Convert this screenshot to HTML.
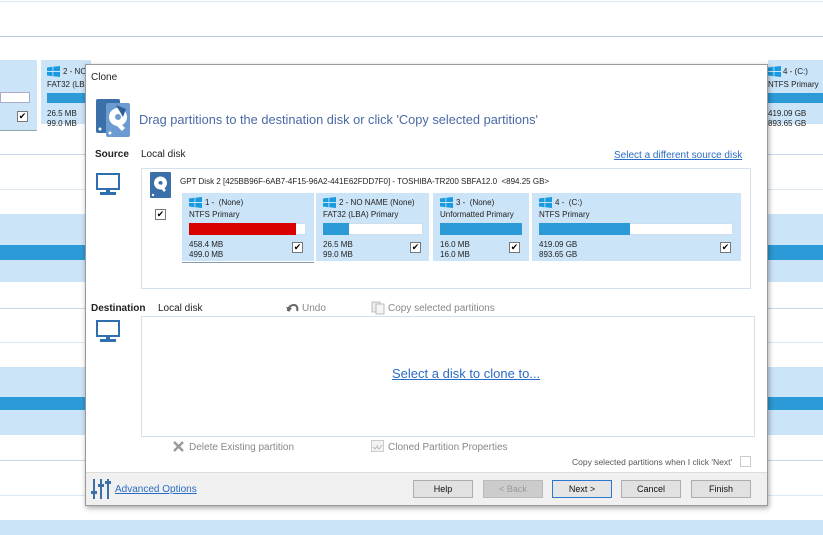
<!DOCTYPE html>
<html><head><meta charset="utf-8"><style>
*{margin:0;padding:0;box-sizing:border-box}
body{width:823px;height:535px;position:relative;overflow:hidden;background:#fff;font-family:"Liberation Sans",sans-serif;color:#222}
.a{position:absolute}
.ln{position:absolute;left:0;width:823px;height:1px;background:#c8d8ea}
.lb{background:#cce4f7}
.st{background:#2b9ad6}
.t8{font-size:8px;line-height:10px}
.cb{position:absolute;width:11px;height:11px;border:1px solid #777;background:#fff;font-size:9px;line-height:9px;text-align:center;color:#000}
.win{width:13px;height:11px}
.btn{position:absolute;top:480px;height:18px;border:1px solid #adadad;background:#e1e1e1;font-size:9px;line-height:16px;text-align:center;color:#111}
.lnk{color:#2b6cc4;text-decoration:underline}
.gray{color:#888}
</style></head><body>
<div class="ln" style="top:1px;background:#dde8f3"></div>
<div class="ln" style="top:36px;background:#b3cce6"></div>
<div class="a lb" style="left:0;top:60px;width:37px;height:70px"></div>
<div class="a" style="left:0;top:92px;width:30px;height:11px;background:#fff;border:1px solid #aac"></div>
<div class="cb" style="left:17px;top:111px">✔</div>
<div class="a" style="left:0;top:130px;width:37px;height:1px;background:#8aa"></div>
<div class="a lb" style="left:41px;top:60px;width:50px;height:64px"></div>
<svg class="a win" style="left:47px;top:66px" viewBox="0 0 13 11"><path d="M0 1.5L5.5 .8V5H0zM6.3 .7L13 0V5H6.3zM0 6H5.5V10.2L0 9.5zM6.3 6H13V11L6.3 10.3z" fill="#1a9be0"/></svg>
<div class="a t8" style="left:63px;top:67px">2 - NO</div>
<div class="a t8" style="left:47px;top:80px">FAT32 (LBA)</div>
<div class="a st" style="left:47px;top:93px;width:40px;height:10px"></div>
<div class="a t8" style="left:47px;top:109px">26.5 MB<br>99.0 MB</div>
<div class="a lb" style="left:768px;top:60px;width:55px;height:64px"></div>
<svg class="a win" style="left:768px;top:66px" viewBox="0 0 13 11"><path d="M0 1.5L5.5 .8V5H0zM6.3 .7L13 0V5H6.3zM0 6H5.5V10.2L0 9.5zM6.3 6H13V11L6.3 10.3z" fill="#1a9be0"/></svg>
<div class="a t8" style="left:783px;top:67px">4 - (C:)</div>
<div class="a t8" style="left:768px;top:80px">NTFS Primary</div>
<div class="a st" style="left:768px;top:93px;width:55px;height:10px"></div>
<div class="a t8" style="left:768px;top:109px">419.09 GB<br>893.65 GB</div>
<div class="ln" style="top:154px"></div>
<div class="ln" style="top:189px;background:#dde8f3"></div>
<div class="a lb" style="left:0;top:214px;width:823px;height:68px"></div>
<div class="a st" style="left:0;top:245px;width:823px;height:15px"></div>
<div class="ln" style="top:308px"></div>
<div class="ln" style="top:342px;background:#dde8f3"></div>
<div class="a lb" style="left:0;top:367px;width:823px;height:68px"></div>
<div class="a st" style="left:0;top:397px;width:823px;height:13px"></div>
<div class="ln" style="top:460px"></div>
<div class="ln" style="top:495px;background:#dde8f3"></div>
<div class="a lb" style="left:0;top:520px;width:823px;height:15px"></div>

<div class="a" style="left:85px;top:64px;width:683px;height:442px;background:#fff;border:1px solid #9a9a9a;box-shadow:1px 2px 5px rgba(0,0,0,.35)"></div>
<div class="a" style="left:91px;top:72px;font-size:10px">Clone</div>
<svg class="a" style="left:96px;top:99px" width="38" height="38" viewBox="0 0 38 38">
<rect x="0" y="0" width="24" height="34" rx="2" fill="#3a6fa8"/>
<rect x="10" y="4" width="24" height="34" rx="2" fill="#6b9bd0"/>
<circle cx="22" cy="18" r="9" fill="#fff"/><circle cx="22" cy="18" r="3" fill="#6b9bd0"/>
<path d="M16 22l10 10 3-3-10-10z" fill="#fff"/><path d="M20 6l10 4-3 8z" fill="#2d5f99"/>
<circle cx="4" cy="30" r="1.5" fill="#fff"/><circle cx="14" cy="34" r="1.5" fill="#fff"/></svg>
<div class="a" style="left:139px;top:112px;font-size:12.8px;color:#4a6aa6">Drag partitions to the destination disk or click 'Copy selected partitions'</div>
<div class="a" style="left:95px;top:149px;font-size:10px;font-weight:bold">Source</div>
<div class="a" style="left:141px;top:149px;font-size:10px">Local disk</div>
<div class="a lnk" style="left:614px;top:150px;font-size:10px">Select a different source disk</div>
<svg class="a" style="left:96px;top:173px" width="24" height="24" viewBox="0 0 24 24"><rect x="1" y="1" width="22" height="15" fill="none" stroke="#2f6fb0" stroke-width="2"/><rect x="10" y="16" width="4" height="3" fill="#2f6fb0"/><rect x="4" y="19" width="16" height="3" fill="#2f6fb0"/></svg>
<div class="a" style="left:141px;top:168px;width:610px;height:121px;border:1px solid #d6e0ea"></div>
<svg class="a" style="left:150px;top:172px" width="21" height="26" viewBox="0 0 21 26"><rect width="21" height="26" rx="1" fill="#3a6fa8"/><circle cx="10.5" cy="11" r="6.5" fill="#fff"/><circle cx="10.5" cy="11" r="2" fill="#3a6fa8"/><path d="M8 13l6 7 2-2-6-6z" fill="#fff"/><circle cx="3" cy="23" r="1.2" fill="#fff"/></svg>
<div class="cb" style="left:155px;top:209px">✔</div>
<div class="a t8" style="left:180px;top:177px">GPT Disk 2 [425BB96F-6AB7-4F15-96A2-441E62FDD7F0] - TOSHIBA-TR200 SBFA12.0 &nbsp;&lt;894.25 GB&gt;</div>

<div class="a lb" style="left:182px;top:193px;width:132px;height:68px"></div>
<div class="a" style="left:182px;top:262px;width:132px;height:1px;background:#8a9aaa"></div>
<div class="a lb" style="left:316px;top:193px;width:113px;height:68px"></div>
<div class="a lb" style="left:433px;top:193px;width:96px;height:68px"></div>
<div class="a lb" style="left:532px;top:193px;width:209px;height:68px"></div>

<svg class="a win" style="left:189px;top:197px" viewBox="0 0 13 11"><path d="M0 1.5L5.5 .8V5H0zM6.3 .7L13 0V5H6.3zM0 6H5.5V10.2L0 9.5zM6.3 6H13V11L6.3 10.3z" fill="#1a9be0"/></svg>
<div class="a t8" style="left:205px;top:198px">1 - &nbsp;(None)</div>
<div class="a t8" style="left:189px;top:210px">NTFS Primary</div>
<div class="a" style="left:189px;top:223px;width:117px;height:12px;background:#fff;border:1px solid #cde"></div>
<div class="a" style="left:189px;top:223px;width:107px;height:12px;background:#d90000"></div>
<div class="a t8" style="left:189px;top:240px">458.4 MB<br>499.0 MB</div>
<div class="cb" style="left:292px;top:242px">✔</div>

<svg class="a win" style="left:323px;top:197px" viewBox="0 0 13 11"><path d="M0 1.5L5.5 .8V5H0zM6.3 .7L13 0V5H6.3zM0 6H5.5V10.2L0 9.5zM6.3 6H13V11L6.3 10.3z" fill="#1a9be0"/></svg>
<div class="a t8" style="left:339px;top:198px">2 - NO NAME (None)</div>
<div class="a t8" style="left:323px;top:210px">FAT32 (LBA) Primary</div>
<div class="a" style="left:323px;top:223px;width:100px;height:12px;background:#fff;border:1px solid #cde"></div>
<div class="a st" style="left:323px;top:223px;width:26px;height:12px"></div>
<div class="a t8" style="left:323px;top:240px">26.5 MB<br>99.0 MB</div>
<div class="cb" style="left:410px;top:242px">✔</div>

<svg class="a win" style="left:440px;top:197px" viewBox="0 0 13 11"><path d="M0 1.5L5.5 .8V5H0zM6.3 .7L13 0V5H6.3zM0 6H5.5V10.2L0 9.5zM6.3 6H13V11L6.3 10.3z" fill="#1a9be0"/></svg>
<div class="a t8" style="left:456px;top:198px">3 - &nbsp;(None)</div>
<div class="a t8" style="left:440px;top:210px">Unformatted Primary</div>
<div class="a st" style="left:440px;top:223px;width:82px;height:12px"></div>
<div class="a t8" style="left:440px;top:240px">16.0 MB<br>16.0 MB</div>
<div class="cb" style="left:509px;top:242px">✔</div>

<svg class="a win" style="left:539px;top:197px" viewBox="0 0 13 11"><path d="M0 1.5L5.5 .8V5H0zM6.3 .7L13 0V5H6.3zM0 6H5.5V10.2L0 9.5zM6.3 6H13V11L6.3 10.3z" fill="#1a9be0"/></svg>
<div class="a t8" style="left:555px;top:198px">4 - &nbsp;(C:)</div>
<div class="a t8" style="left:539px;top:210px">NTFS Primary</div>
<div class="a" style="left:539px;top:223px;width:194px;height:12px;background:#fff;border:1px solid #cde"></div>
<div class="a st" style="left:539px;top:223px;width:91px;height:12px"></div>
<div class="a t8" style="left:539px;top:240px">419.09 GB<br>893.65 GB</div>
<div class="cb" style="left:720px;top:242px">✔</div>

<div class="a" style="left:91px;top:303px;font-size:10px;font-weight:bold">Destination</div>
<div class="a" style="left:158px;top:303px;font-size:10px">Local disk</div>
<svg class="a" style="left:286px;top:303px" width="13" height="10" viewBox="0 0 13 10"><path d="M2 8C2 4 5 2 8 2S12 5 11 8" fill="none" stroke="#666" stroke-width="2"/><path d="M0 4l3 5 3-4z" fill="#666"/></svg>
<div class="a gray" style="left:302px;top:303px;font-size:10px">Undo</div>
<svg class="a" style="left:371px;top:301px" width="14" height="14" viewBox="0 0 14 14"><rect x="1" y="1" width="8" height="10" fill="#eee" stroke="#bbb"/><rect x="5" y="3" width="8" height="10" fill="#f4f4f4" stroke="#bbb"/></svg>
<div class="a gray" style="left:388px;top:303px;font-size:10px">Copy selected partitions</div>
<svg class="a" style="left:96px;top:320px" width="24" height="24" viewBox="0 0 24 24"><rect x="1" y="1" width="22" height="15" fill="none" stroke="#2f6fb0" stroke-width="2"/><rect x="10" y="16" width="4" height="3" fill="#2f6fb0"/><rect x="4" y="19" width="16" height="3" fill="#2f6fb0"/></svg>
<div class="a" style="left:141px;top:316px;width:614px;height:121px;border:1px solid #d6e0ea"></div>
<div class="a lnk" style="left:392px;top:366px;font-size:13px">Select a disk to clone to...</div>

<svg class="a" style="left:173px;top:441px" width="11" height="11" viewBox="0 0 11 11"><path d="M1 1l9 9M10 1l-9 9" stroke="#999" stroke-width="2.4"/></svg>
<div class="a gray" style="left:189px;top:442px;font-size:10px">Delete Existing partition</div>
<svg class="a" style="left:371px;top:440px" width="13" height="12" viewBox="0 0 13 12"><rect x=".5" y=".5" width="12" height="11" fill="#f3f3f3" stroke="#ccc"/><path d="M2 7l2 2 3-4M6 7l2 2 3-4" stroke="#bbb" fill="none"/></svg>
<div class="a gray" style="left:388px;top:442px;font-size:10px">Cloned Partition Properties</div>
<div class="a" style="left:572px;top:457px;font-size:8.5px;color:#555">Copy selected partitions when I click 'Next'</div>
<div class="a" style="left:740px;top:456px;width:11px;height:11px;border:1px solid #ccc;background:#fff"></div>

<div class="a" style="left:86px;top:472px;width:681px;height:33px;background:#f0f0f0;border-top:1px solid #dcdcdc"></div>
<svg class="a" style="left:91px;top:479px" width="20" height="20" viewBox="0 0 20 20" fill="#3a6fa8"><rect x="2" y="0" width="2" height="20"/><rect x="9" y="0" width="2" height="20"/><rect x="16" y="0" width="2" height="20"/><rect x="0" y="12" width="6" height="3"/><rect x="7" y="5" width="6" height="3"/><rect x="14" y="2" width="6" height="3"/></svg>
<div class="a lnk" style="left:115px;top:484px;font-size:10px">Advanced Options</div>
<div class="btn" style="left:413px;width:60px">Help</div>
<div class="btn" style="left:483px;width:60px;color:#999;background:#ccc;border-color:#bbb">&lt; Back</div>
<div class="btn" style="left:552px;width:60px;border-color:#2b78d0;background:#e5e5e5">Next &gt;</div>
<div class="btn" style="left:621px;width:60px">Cancel</div>
<div class="btn" style="left:691px;width:60px">Finish</div>
</body></html>
